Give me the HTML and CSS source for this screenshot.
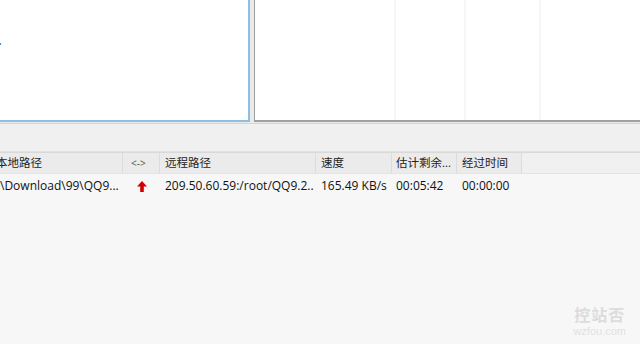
FILE: index.html
```html
<!DOCTYPE html>
<html>
<head>
<meta charset="utf-8">
<link rel="stylesheet" href="styles.css">
</head>
<body>
<div class="app">
  <div class="top">
    <div class="pane local"><span class="clip">.</span></div>
    <div class="gap"></div>
    <div class="pane remote">
      <div class="rcol c1"></div>
      <div class="rcol c2"></div>
      <div class="rcol c3"></div>
      <div class="rcol c4"></div>
    </div>
  </div>
  <div class="strip"></div>
  <div class="queue">
    <div class="row head">
      <div class="cell w1 first">本地路径</div>
      <div class="cell w2 dir">&lt;-&gt;</div>
      <div class="cell w3">远程路径</div>
      <div class="cell w4">速度</div>
      <div class="cell w5">估计剩余...</div>
      <div class="cell w6">经过时间</div>
      <div class="cell fill"></div>
    </div>
    <div class="row data">
      <div class="cell w1 firstd">\Download\99\QQ9...</div>
      <div class="cell w2 arrowcell">
        <svg width="10" height="11" viewBox="0 0 10 11"><path d="M5 0 L10 5.5 L6.8 5.5 L6.8 11 L3.2 11 L3.2 5.5 L0 5.5 Z" fill="#d40000"/></svg>
      </div>
      <div class="cell w3">209.50.60.59:/root/QQ9.2..</div>
      <div class="cell w4">165.49 KB/s</div>
      <div class="cell w5">00:05:42</div>
      <div class="cell w6">00:00:00</div>
    </div>
  </div>
  <div class="mark">
    <div class="mark-cn">控站否</div>
    <div class="mark-en">wzfou.com</div>
  </div>
</div>
</body>
</html>
```

FILE: styles.css
```css
* { box-sizing: border-box; }
html, body { margin: 0; padding: 0; }
body {
  width: 640px;
  height: 344px;
  overflow: hidden;
  font-family: "Open Sans", "Noto Sans CJK SC", sans-serif;
  font-size: 12px;
  color: #1a1a1a;
  background: #f7f7f7;
}
.app {
  position: relative;
  width: 640px;
  height: 344px;
  display: flex;
  flex-direction: column;
}
.top {
  height: 123px;
  display: flex;
  background: #eaeaea;
}
.pane { background: #fff; height: 122px; }
.local {
  width: 250px;
  border-right: 2px solid #8cbfe0;
  border-bottom: 2px solid #8cbfe0;
  position: relative;
}
.clip {
  position: absolute;
  left: -2px;
  top: 32px;
  color: #333;
  font-weight: bold;
}
.gap { width: 4px; }
.remote {
  flex: 1;
  border-left: 1px solid #a0a0a0;
  border-bottom: 2px solid #a0a0a0;
  display: flex;
}
.rcol { height: 120px; border-right: 2px solid #f6f6f6; }
.c1 { width: 141px; }
.c2 { width: 70px; }
.c3 { width: 75px; }
.c4 { flex: 1; border-right: none; }
.strip {
  height: 29px;
  background: #f0f0f0;
  border-top: 1px solid #d6d6d6;
  border-bottom: 1px solid #e2e2e2;
}
.queue {
  flex: 1;
  background: #f7f7f7;
  margin-left: -10px;
}
.row { display: flex; }
.head {
  height: 22px;
  background: #ebebeb;
  border-top: 1px solid #d9d9d9;
  border-bottom: 1px solid #e4e4e4;
}
.head .cell {
  line-height: 20px;
  font-size: 11.5px;
  border-right: 1px solid #dcdcdc;
  color: #222;
}
.head .dir { font-size: 10px; color: #555; padding-left: 8px; }
.head .fill { flex: 1; border-right: none; background: #f0f0f0; }
.cell {
  padding-left: 5px;
  white-space: nowrap;
  overflow: hidden;
}
.w1 { width: 133px; }
.w2 { width: 37px; }
.w3 { width: 156px; }
.w4 { width: 76px; }
.w5 { width: 65px; padding-left: 4px; }
.w6 { width: 65px; }
.first { padding-left: 6px; }
.data { height: 24px; }
.data .cell { line-height: 24px; color: #111; }
.firstd { padding-left: 10px; }
.arrowcell { display: flex; align-items: center; padding-left: 14px; }
.mark {
  position: absolute;
  right: 14px;
  bottom: 6px;
  display: flex;
  flex-direction: column;
  align-items: center;
  gap: 1px;
}
.mark-cn {
  font-family: "Noto Sans CJK SC", sans-serif;
  font-weight: bold;
  font-size: 16px;
  line-height: 20px;
  letter-spacing: 1px;
  color: #dcdcdc;
}
.mark-en {
  font-family: "Liberation Sans", sans-serif;
  font-size: 11px;
  line-height: 13px;
  color: #e2e2e2;
}
```
